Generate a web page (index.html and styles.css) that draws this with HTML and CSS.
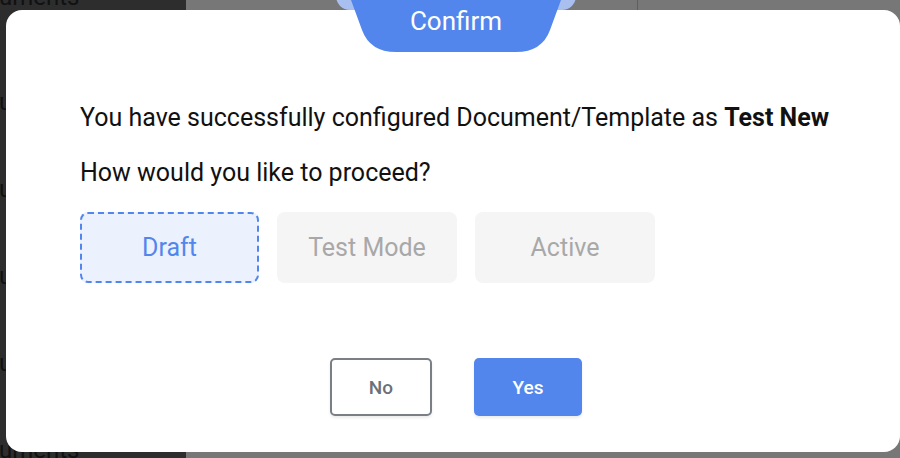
FILE: index.html
```html
<!DOCTYPE html>
<html>
<head>
    <title>Confirm</title>
    <link rel="stylesheet" href="styles.css">
</head>
<body>
    <div class="page">
        <div class="sidebar">
            <div class="nav-item first">Documents</div>
            <div class="nav-item">Documents</div>
            <div class="nav-item">Documents</div>
            <div class="nav-item">Documents</div>
            <div class="nav-item">Documents</div>
            <div class="nav-item">Documents</div>
        </div>
        <div class="main">
            <span class="divider"></span>
        </div>
    </div>
    <div class="overlay-tab"></div>
    <div class="modal">
        <div class="modal-tab">
            <svg width="210" height="52" viewBox="0 0 210 52">
                <path d="M0 0 L210 0 L199 30 Q191 52 165 52 L45 52 Q19 52 11 30 Z" fill="#5386ec"/>
            </svg>
            <span class="tab-title">Confirm</span>
        </div>
        <p class="message">You have successfully configured Document/Template as <b>Test New</b></p>
        <p class="question">How would you like to proceed?</p>
        <div class="options">
            <div class="option selected">Draft</div>
            <div class="option">Test Mode</div>
            <div class="option">Active</div>
        </div>
        <div class="actions">
            <button class="btn btn-no">No</button>
            <button class="btn btn-yes">Yes</button>
        </div>
    </div>
</body>
</html>
```

FILE: styles.css
```css
body {
    margin: 0;
    font-family: Roboto, "Liberation Sans", sans-serif;
    overflow: hidden;
    width: 900px;
    height: 458px;
    position: relative;
}
.page {
    display: flex;
    height: 458px;
}
.sidebar {
    width: 186px;
    background: #2d2d2d;
    overflow: hidden;
}
.nav-item {
    font-size: 24px;
    line-height: 28px;
    color: #111;
    margin-left: -43px;
    height: 87px;
    white-space: nowrap;
}
.nav-item.first {
    margin-top: -17px;
    height: 105px;
}
.main {
    flex: 1;
    background: #777;
    position: relative;
}
.divider {
    position: absolute;
    left: 451px;
    top: 0;
    width: 1px;
    height: 10px;
    background: #5e5e5e;
}
.overlay-tab {
    position: absolute;
    left: 336px;
    top: -20px;
    width: 240px;
    height: 30px;
    border-radius: 14px;
    background: #a9bff0;
}
.modal {
    position: absolute;
    left: 6px;
    top: 10px;
    width: 894px;
    height: 442px;
    box-sizing: border-box;
    background: #fff;
    border-radius: 16px;
    padding: 93px 40px 0 74px;
}
.modal-tab {
    position: absolute;
    left: 345px;
    top: -10px;
    width: 210px;
    height: 52px;
}
.modal-tab svg {
    display: block;
}
.tab-title {
    position: absolute;
    left: 0;
    right: 0;
    top: 6px;
    text-align: center;
    color: #fff;
    font-size: 26px;
    line-height: 30px;
}
.message, .question {
    margin: 0;
    font-size: 25px;
    line-height: 30px;
    color: #111;
    white-space: nowrap;
}
.message b {
    font-weight: 700;
}
.question {
    margin-top: 25px;
}
.options {
    display: flex;
    gap: 18px;
    margin-top: 24px;
}
.option {
    width: 180px;
    height: 71px;
    box-sizing: border-box;
    border-radius: 8px;
    background: #f5f5f5;
    color: #a8a8a8;
    font-size: 25px;
    display: flex;
    align-items: center;
    justify-content: center;
}
.option.selected {
    width: 179px;
    background: #ebf1fd;
    border: 2px dashed #5386ec;
    color: #5386ec;
}
.actions {
    display: flex;
    justify-content: center;
    gap: 42px;
    margin-top: 75px;
    margin-left: -34px;
    padding-left: 6px;
}
.btn {
    height: 58px;
    border-radius: 5px;
    font-family: Roboto, sans-serif;
    font-size: 19px;
    font-weight: 500;
    box-shadow: 0 2px 3px rgba(0, 0, 0, 0.08);
    cursor: pointer;
}
.btn-no {
    width: 102px;
    background: #fff;
    border: 2px solid #7a7e85;
    color: #6b7079;
}
.btn-yes {
    width: 108px;
    background: #5386ec;
    border: none;
    color: #fff;
}
```
